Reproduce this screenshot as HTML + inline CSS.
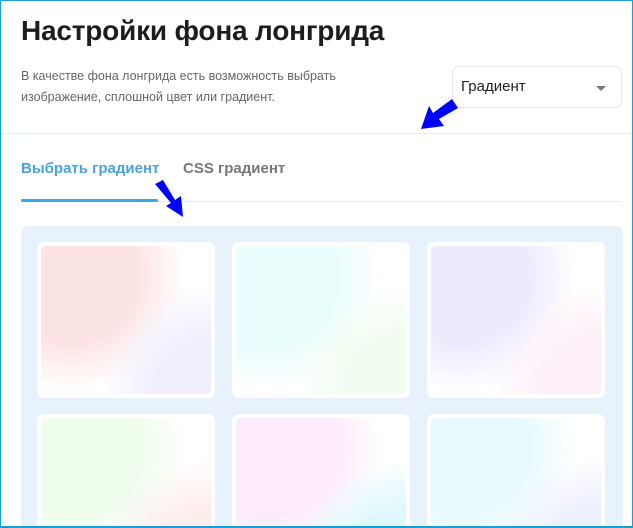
<!DOCTYPE html>
<html><head><meta charset="utf-8"><style>
*{margin:0;padding:0;box-sizing:border-box}
html,body{width:633px;height:528px;overflow:hidden}
body{background:#fff;font-family:"Liberation Sans","DejaVu Sans",sans-serif;position:relative}
.wrap{position:absolute;left:0;top:0;width:633px;height:528px;overflow:hidden}
.frame{position:absolute;left:0;top:0;width:633px;height:528px;border:1px solid #1a9fd0;border-bottom-width:2px}
h1{position:absolute;left:21px;top:15px;font-size:28px;font-weight:bold;color:#1d1d1f;letter-spacing:-0.2px}
.desc{position:absolute;left:21px;top:66px;font-size:12.5px;line-height:21px;color:#666}
.sel{position:absolute;left:452px;top:66px;width:170px;height:42px;border:1px solid #e3e6ea;border-radius:7px;font-size:15px;color:#222;padding:11px 0 0 8px}
.sel:after{content:"";position:absolute;right:15px;top:19px;border:5px solid transparent;border-top:5px solid #777;border-bottom:0}
.hr1{position:absolute;left:1px;right:1px;top:133px;height:1px;background:#e8eef5}
.tab{position:absolute;top:160px;font-size:15px;font-weight:bold}
.ul{position:absolute;left:21px;top:199px;width:137px;height:3px;background:#3ba7e5;border-radius:2px}
.hr2{position:absolute;left:21px;right:11px;top:201px;height:1px;background:#e5e8ec}
.panel{position:absolute;left:21px;top:226px;width:602px;height:302px;background:#e8f2fc;border-radius:7px 7px 0 0}
.card{position:absolute;width:178px;height:156px;background:#fff;border-radius:7px;padding:4px}
.card.b{height:114px;border-radius:7px 7px 0 0;padding-bottom:0}
.card div{width:100%;height:100%;border-radius:5px}
.card.b div{height:148px}
.clip{position:absolute;left:0;top:0;width:633px;height:528px;overflow:hidden}
</style></head><body><div class="wrap">
<h1>Настройки фона лонгрида</h1>
<div class="desc">В качестве фона лонгрида есть возможность выбрать<br>изображение, сплошной цвет или градиент.</div>
<div class="sel">Градиент</div>
<div class="hr1"></div>
<div class="tab" style="left:21px;color:#4aa3dc">Выбрать градиент</div>
<div class="tab" style="left:183px;color:#777">CSS градиент</div>
<div class="hr2"></div>
<div class="ul"></div>
<div class="panel"></div>
<div class="card" style="left:37px;top:242px"><div style="background:radial-gradient(circle 110px at 170px 150px,#f0effe 55%,rgba(255,255,255,0) 100%),radial-gradient(circle 115px at 30px 30px,#fde4e4 60%,#fff 100%)"></div></div>
<div class="card" style="left:232px;top:242px"><div style="background:radial-gradient(circle 110px at 170px 150px,#f1fdf0 55%,rgba(255,255,255,0) 100%),radial-gradient(circle 115px at 30px 30px,#e8fdfc 60%,#fff 100%)"></div></div>
<div class="card" style="left:427px;top:242px"><div style="background:radial-gradient(circle 110px at 170px 150px,#fdf0f8 55%,rgba(255,255,255,0) 100%),radial-gradient(circle 115px at 30px 30px,#ecebfe 60%,#fff 100%)"></div></div>
<div class="card b" style="left:37px;top:414px;overflow:hidden"><div style="background:radial-gradient(circle 110px at 170px 150px,#fdeeec 55%,rgba(255,255,255,0) 100%),radial-gradient(circle 115px at 30px 30px,#effdec 60%,#fff 100%)"></div></div>
<div class="card b" style="left:232px;top:414px;overflow:hidden"><div style="background:radial-gradient(circle 110px at 170px 150px,#e0f8fd 55%,rgba(255,255,255,0) 100%),radial-gradient(circle 115px at 30px 30px,#fdeafa 60%,#fff 100%)"></div></div>
<div class="card b" style="left:427px;top:414px;overflow:hidden"><div style="background:radial-gradient(circle 110px at 170px 150px,#eeeffd 55%,rgba(255,255,255,0) 100%),radial-gradient(circle 115px at 30px 30px,#e9fafe 60%,#fff 100%)"></div></div>
<svg width="633" height="528" style="position:absolute;left:0;top:0">
<polygon points="458,108 452,99 433,113 429,106 421,129 444,126 439,119" fill="#0000ff"/>
<polygon points="155,184 163,180 175,200 181,196 183,217 166,206 171,203" fill="#0000ff"/>
</svg>
<div class="frame"></div>
</div></body></html>
